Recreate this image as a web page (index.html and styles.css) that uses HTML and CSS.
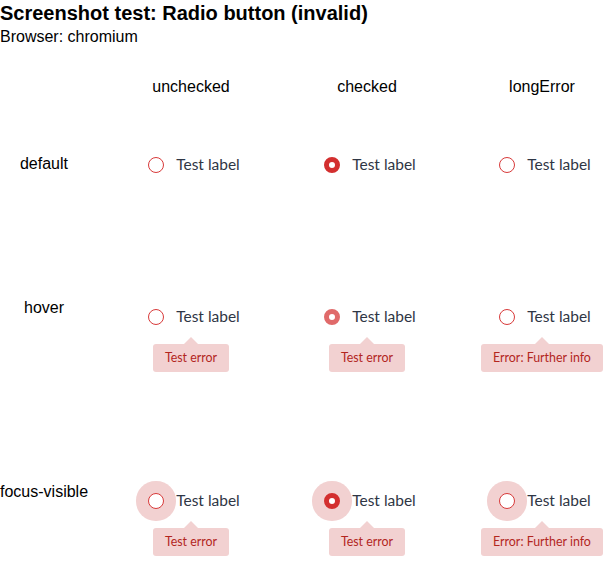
FILE: index.html
```html
<!DOCTYPE html>
<html>
<head>
<meta charset="utf-8">
<link rel="stylesheet" href="styles.css">
</head>
<body>
<h1 class="title">Screenshot test: Radio button (invalid)</h1>
<p class="browser">Browser: chromium</p>
<div class="matrix">
  <div class="corner"></div>
  <div class="colhead">unchecked</div>
  <div class="colhead">checked</div>
  <div class="colhead last">longError</div>

  <div class="rowhead r-default">default</div>
  <div class="cell r-default"><div class="group"><span class="radio"></span><span class="label">Test label</span></div></div>
  <div class="cell r-default"><div class="group"><span class="radio checked"></span><span class="label">Test label</span></div></div>
  <div class="cell last r-default"><div class="group"><span class="radio"></span><span class="label">Test label</span></div></div>

  <div class="rowhead r-hover">hover</div>
  <div class="cell r-hover"><div class="group"><span class="radio"></span><span class="label">Test label</span></div><div class="tip">Test error</div></div>
  <div class="cell r-hover"><div class="group"><span class="radio checked hovered"></span><span class="label">Test label</span></div><div class="tip">Test error</div></div>
  <div class="cell last r-hover"><div class="group"><span class="radio"></span><span class="label">Test label</span></div><div class="tip">Error: Further info</div></div>

  <div class="rowhead r-focus">focus-visible</div>
  <div class="cell r-focus"><div class="group"><span class="radio focused"></span><span class="label">Test label</span></div><div class="tip">Test error</div></div>
  <div class="cell r-focus"><div class="group"><span class="radio checked focused"></span><span class="label">Test label</span></div><div class="tip">Test error</div></div>
  <div class="cell last r-focus"><div class="group"><span class="radio focused"></span><span class="label">Test label</span></div><div class="tip">Error: Further info</div></div>
</div>
</body>
</html>
```

FILE: styles.css
```css
html, body {
  margin: 0;
  padding: 0;
  background: #ffffff;
}
body {
  font-family: "Liberation Sans", Arial, sans-serif;
  color: #000;
}
.title {
  font-size: 20px;
  font-weight: bold;
  margin: 0;
  padding-top: 2px;
  line-height: 23px;
}
.browser {
  font-size: 16px;
  margin: 3px 0 0 0;
  line-height: 18px;
}
.matrix {
  display: grid;
  grid-template-columns: 88px 206px 146px 1fr;
  grid-template-rows: 75px 146px 184px 86px;
  margin-top: 32px;
  font-size: 16px;
  line-height: 18px;
}
.colhead {
  text-align: center;
  align-self: start;
}
.last {
  padding-left: 29px;
}
.rowhead {
  text-align: center;
  align-self: start;
  white-space: nowrap;
}
.rowhead.r-default {
  margin-top: 2px;
}
.cell {
  display: flex;
  flex-direction: column;
  align-items: center;
  align-self: start;
}
.cell.r-default {
  margin-top: -1px;
}
.cell.r-hover, .cell.r-focus {
  margin-top: 5px;
}
.group {
  display: flex;
  align-items: center;
  height: 24px;
  gap: 12px;
  padding-left: 6px;
}
.radio {
  box-sizing: border-box;
  width: 16px;
  height: 16px;
  border-radius: 50%;
  border: 1px solid #d83a3a;
  background: #fff;
  flex: none;
  margin-top: 1px;
}
.radio.checked {
  border: 5px solid #d32f2f;
}
.radio.checked.hovered {
  border-color: #e06a6a;
}
.radio.focused {
  box-shadow: 0 0 0 12px #f2d1d1;
}
.label {
  font-family: "Lato", "Open Sans", sans-serif;
  font-size: 15.5px;
  color: #2f3645;
}
.tip {
  position: relative;
  margin-top: 16px;
  height: 28px;
  line-height: 28px;
  padding: 0 12px;
  background: #f2d1d1;
  color: #b3261e;
  border-radius: 3px;
  font-family: "Lato", "Open Sans", sans-serif;
  font-size: 12.4px;
}
.tip::before {
  content: "";
  position: absolute;
  left: 50%;
  top: -7px;
  margin-left: -7px;
  border-left: 7px solid transparent;
  border-right: 7px solid transparent;
  border-bottom: 7px solid #f2d1d1;
}
```
